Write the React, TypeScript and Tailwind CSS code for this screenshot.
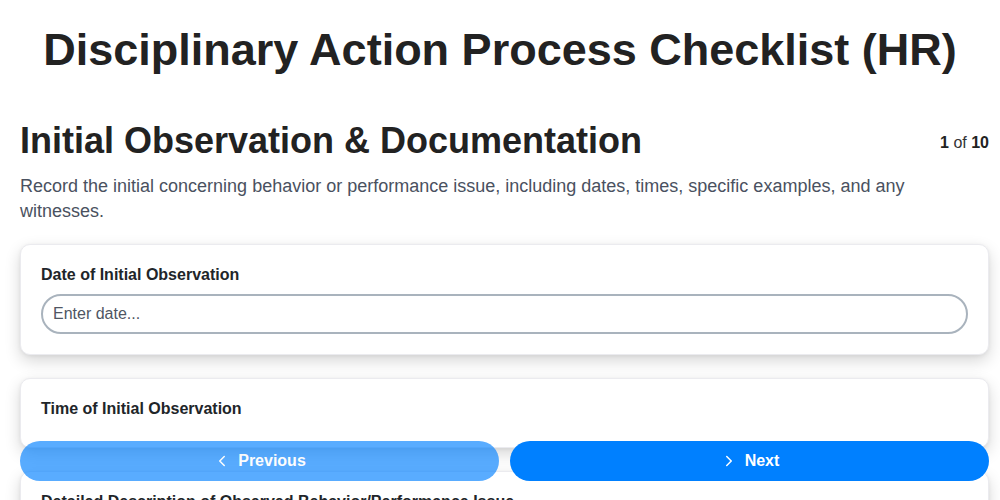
import { ChevronLeft, ChevronRight } from 'lucide-react';

const FONT = { fontFamily: '"Liberation Sans", Arial, sans-serif' };

function FieldCard({ label, children }: { label: string; children?: React.ReactNode }) {
	return (
		<div className="rounded-[10px] border border-[#ebebef] bg-white px-5 pt-5 pb-5 shadow-[0_6px_16px_rgba(0,0,0,0.16),0_1px_4px_rgba(0,0,0,0.06)]">
			<label className="block text-[16px] leading-[20px] font-bold text-[#212529]">{label}</label>
			{children}
		</div>
	);
}

export default function App() {
	return (
		<div className="min-h-[500px] bg-white text-[#212529]" style={FONT}>
			<h1 className="pt-[23px] text-center text-[45px] leading-[54px] font-bold text-[#222]">
				Disciplinary Action Process Checklist (HR)
			</h1>

			<div className="pl-5 pr-[11px] pt-[44px] pb-24">
				<div className="flex items-start justify-between">
					<h2 className="text-[36px] leading-[40px] font-bold text-[#222]">
						Initial Observation &amp; Documentation
					</h2>
					<div className="pt-[10px] text-[16px] text-[#333]">
						<span className="font-bold text-[#222]">1</span> of{' '}
						<span className="font-bold text-[#222]">10</span>
					</div>
				</div>
				<p className="mt-[13px] text-[18px] leading-[25px] text-[#4a5160]">
					Record the initial concerning behavior or performance issue, including dates, times, specific examples, and any
					witnesses.
				</p>

				<div className="mt-5 flex flex-col gap-[23px]">
					<FieldCard label="Date of Initial Observation">
						<input
							type="text"
							placeholder="Enter date..."
							className="mt-[9px] block h-10 w-full rounded-full border-2 border-[#a9b3bd] bg-white px-[10px] text-[16px] text-[#212529] outline-none placeholder:text-[#4f5663]"
						/>
					</FieldCard>
					<FieldCard label="Time of Initial Observation">
						<div className="h-[8px]" />
					</FieldCard>
					<FieldCard label="Detailed Description of Observed Behavior/Performance Issue">
						<textarea
							placeholder="Enter description..."
							className="mt-[9px] block h-24 w-full rounded-[20px] border-2 border-[#a9b3bd] bg-white px-[10px] py-2 text-[16px] outline-none placeholder:text-[#4f5663]"
						/>
					</FieldCard>
				</div>
			</div>

			<div className="fixed bottom-[19px] left-5 right-[11px] flex gap-[11px]">
				<button
					type="button"
					className="flex h-10 flex-1 items-center justify-center gap-[7px] rounded-full bg-[#0080ff] text-[16px] font-bold text-white opacity-[0.65]"
				>
					<ChevronLeft size={18} strokeWidth={2} />
					Previous
				</button>
				<button
					type="button"
					className="flex h-10 flex-1 items-center justify-center gap-[7px] rounded-full bg-[#0080ff] text-[16px] font-bold text-white"
				>
					<ChevronRight size={18} strokeWidth={2} />
					Next
				</button>
			</div>
		</div>
	);
}
